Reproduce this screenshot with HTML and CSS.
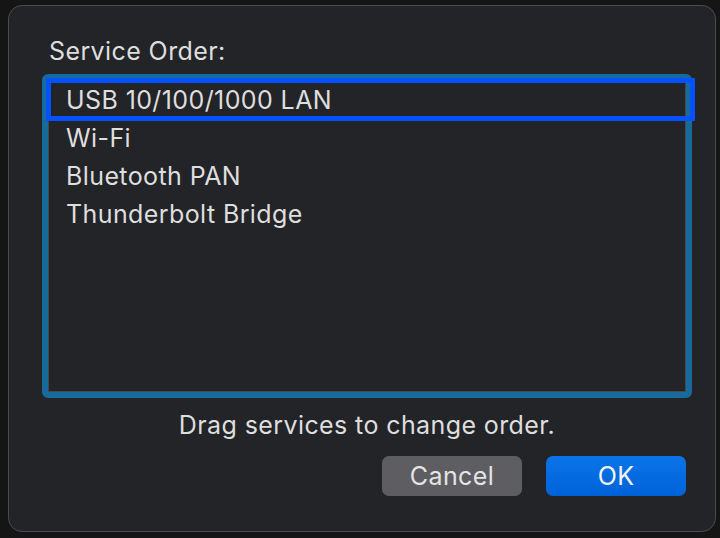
FILE: index.html
```html
<!DOCTYPE html>
<html lang="en">
<head>
    <meta charset="UTF-8">
    <meta name="viewport" content="width=device-width, initial-scale=1.0">
    <title>Service Order</title>
    <link rel="stylesheet" href="styles.css">
</head>
<body>
    <div class="dialog">
        <div class="title">Service Order:</div>

        <div class="list-ring">
            <ul class="service-list">
                <li class="selected">USB 10/100/1000 LAN</li>
                <li>Wi-Fi</li>
                <li>Bluetooth PAN</li>
                <li>Thunderbolt Bridge</li>
            </ul>
        </div>

        <p class="hint">Drag services to change order.</p>

        <div class="buttons">
            <button type="button" class="btn cancel">Cancel</button>
            <button type="button" class="btn ok">OK</button>
        </div>
    </div>
</body>
</html>
```

FILE: styles.css
```css
body {
    margin: 0;
    padding: 5px 0 0 8px;
    background-color: #151516;
    font-family: Inter, "Liberation Sans", sans-serif;
    font-size: 25px;
    letter-spacing: 0.4px;
    line-height: 30px;
    color: #dedede;
    overflow: hidden;
}

.dialog {
    box-sizing: border-box;
    width: 708px;
    height: 527px;
    padding: 30px 0 0 33px;
    background-color: #232428;
    border: 1px solid #4c4c50;
    border-radius: 14px;
}

.title {
    padding-left: 7px;
    margin-bottom: 8px;
}

.list-ring {
    width: 650px;
    box-sizing: border-box;
    border: 6px solid #176a99;
    border-radius: 6px;
}

.service-list {
    list-style: none;
    margin: 0;
    padding: 0;
    height: 310px;
    border: 1px solid #47484c;
    background-color: #232428;
}

.service-list li {
    position: relative;
    height: 38px;
    line-height: 38px;
    padding-left: 17px;
}

.service-list li.selected::after {
    content: "";
    position: absolute;
    top: -3px;
    bottom: -2px;
    left: -3px;
    right: -10px;
    border: 5px solid #0550ff;
}

.hint {
    width: 650px;
    margin: 12px 0 0 0;
    text-align: center;
}

.buttons {
    width: 644px;
    display: flex;
    justify-content: flex-end;
    gap: 24px;
    margin-top: 16px;
}

.btn {
    width: 140px;
    height: 40px;
    border: none;
    border-radius: 7px;
    font-family: inherit;
    font-size: 25px;
    letter-spacing: 0.4px;
    color: #e4e4e4;
    padding: 0;
}

.cancel {
    background-color: #5e5e62;
}

.ok {
    background: linear-gradient(#0b74e9, #0062d8);
    color: #f4f4f4;
}
```
